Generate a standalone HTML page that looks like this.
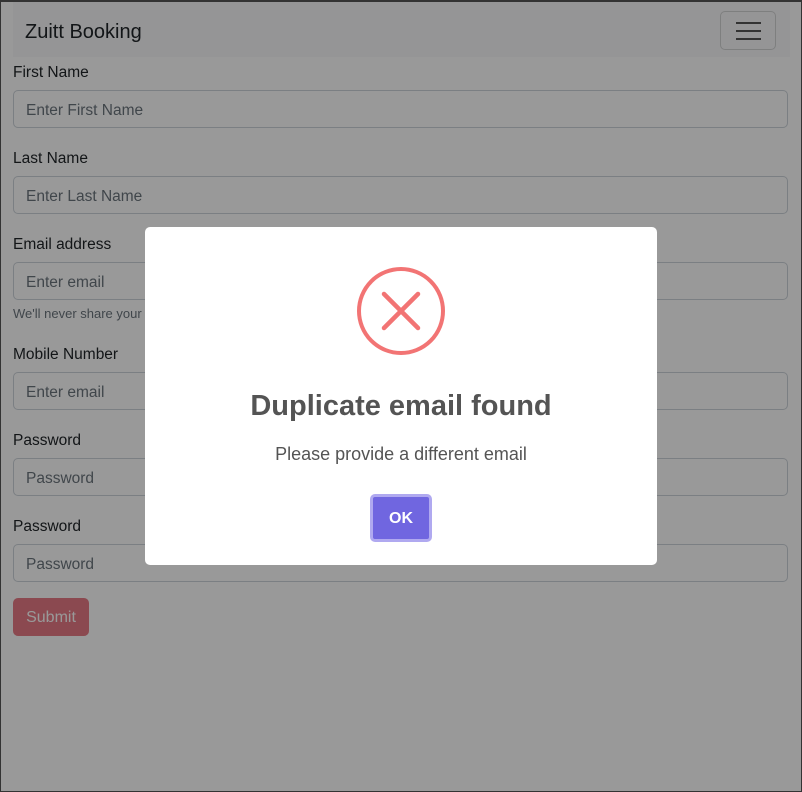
<!DOCTYPE html>
<html><head><style>
*{box-sizing:border-box}
body{margin:0;width:802px;height:792px;overflow:hidden;font-family:"Liberation Sans",sans-serif;background:#fff;position:relative}
.frame{position:absolute;inset:0;border:1px solid #333;border-top:2px solid #333}
.nav{position:absolute;left:13px;top:2px;width:777px;height:55px;background:#f8f9fa}
.brand{position:absolute;left:12px;top:19px;font-size:20px;color:#212529}
.tog{position:absolute;left:707px;top:9px;width:56px;height:39px;border:1px solid rgba(0,0,0,.15);border-radius:5px}
.tog i{position:absolute;left:15px;width:25px;height:2px;background:#555}
.lab{position:absolute;left:13px;font-size:15.5px;color:#212529;margin-top:2px}
.inp{position:absolute;left:13px;width:775px;height:38px;border:1px solid #ced4da;border-radius:5px;font-size:15.5px;color:#6c757d;padding:11px 12px 0}
.help{position:absolute;left:13px;top:306px;font-size:13px;color:#6c757d}
.sub{position:absolute;left:13px;top:598px;width:76px;height:38px;background:#dc3545;opacity:.65;border-radius:5px;color:#fff;font-size:16px;text-align:center;line-height:40px}
.ov{position:absolute;inset:0;background:rgba(0,0,0,.4)}
.modal{position:absolute;left:145px;top:227px;width:512px;height:338px;background:#fff;border-radius:5px;text-align:center;color:#545454}
.t{position:absolute;left:0;right:0;top:163px;font-size:29px;font-weight:600}
.m{position:absolute;left:0;right:0;top:217px;font-size:18px}
.ok{position:absolute;left:225px;top:267px;width:62px;height:48px;border-radius:5px;background:#7066e0;border:3px solid #b0a9f0;color:#fff;font-weight:bold;font-size:16px;line-height:44px}
</style></head><body>
<div class="nav"><div class="brand">Zuitt Booking</div><div class="tog"><i style="top:10px"></i><i style="top:18px"></i><i style="top:26px"></i></div></div>
<div class="lab" style="top:62px">First Name</div><div class="inp" style="top:90px">Enter First Name</div>
<div class="lab" style="top:148px">Last Name</div><div class="inp" style="top:176px">Enter Last Name</div>
<div class="lab" style="top:234px">Email address</div><div class="inp" style="top:262px">Enter email</div>
<div class="help">We'll never share your email with anyone else.</div>
<div class="lab" style="top:344px">Mobile Number</div><div class="inp" style="top:372px">Enter email</div>
<div class="lab" style="top:430px">Password</div><div class="inp" style="top:458px">Password</div>
<div class="lab" style="top:516px">Password</div><div class="inp" style="top:544px">Password</div>
<div class="sub">Submit</div>
<div class="ov"></div>
<div class="frame"></div>
<div class="modal">
<svg style="position:absolute;left:210px;top:38px" width="92" height="92" viewBox="0 0 92 92"><circle cx="46" cy="46" r="42" fill="none" stroke="#f27474" stroke-width="4"/><path d="M29 29L63 63M63 29L29 63" stroke="#f27474" stroke-width="4.5" stroke-linecap="round"/></svg>
<div class="t">Duplicate email found</div>
<div class="m">Please provide a different email</div>
<div class="ok">OK</div>
</div>
</body></html>
